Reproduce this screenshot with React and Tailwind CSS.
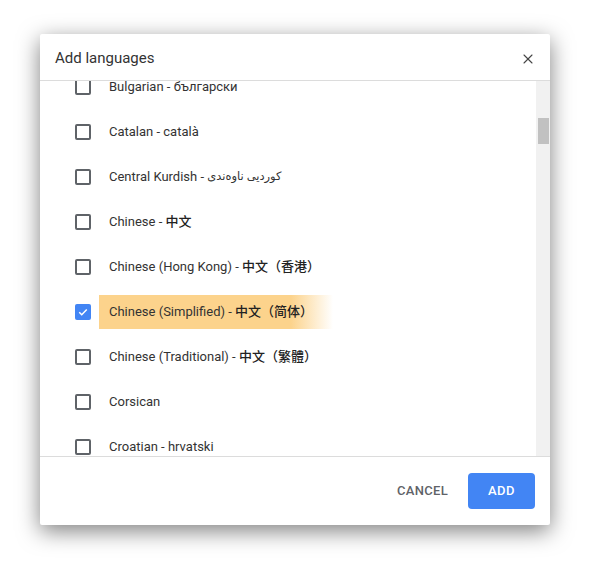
import { X } from "lucide-react";

const languages = [
  { name: "Bulgarian - български" },
  { name: "Catalan - català" },
  { name: "Central Kurdish - ", native: "کوردیی ناوەندی", rtl: true },
  { name: "Chinese - ", native: "中文", cjk: true },
  { name: "Chinese (Hong Kong) - ", native: "中文（香港）", cjk: true },
  { name: "Chinese (Simplified) - ", native: "中文（简体）", cjk: true, checked: true },
  { name: "Chinese (Traditional) - ", native: "中文（繁體）", cjk: true },
  { name: "Corsican" },
  { name: "Croatian - hrvatski" },
  { name: "Czech - čeština" },
];

const Checkbox = ({ checked }) =>
  checked ? (
    <div className="w-4 h-4 rounded-[2px] bg-[#4285f4] flex items-center justify-center">
      <svg width="12" height="12" viewBox="0 0 24 24" fill="none">
        <path d="M4.5 12.5l5 5L19.5 7" stroke="white" strokeWidth="3" />
      </svg>
    </div>
  ) : (
    <div className="w-4 h-4 rounded-[2px] border-2 border-[#5f6368]" />
  );

const LanguageRow = ({ name, native, cjk, rtl, checked }) => (
  <div className="h-[45px] flex items-center pl-[35px]">
    <Checkbox checked={checked} />
    <div className="ml-[8px] h-[34px] flex items-center">
      <span
        className={`h-[34px] flex items-center whitespace-pre pl-[10px] pr-[20px] text-[13px] text-[#333] ${
          checked
            ? "bg-[linear-gradient(to_right,#fcd38c_0%,#fcd38c_82%,rgba(252,211,140,0)_100%)]"
            : ""
        }`}
      >
        {name}
        {native && (
          <span className={cjk ? "font-medium text-[#222]" : rtl ? "text-[11.5px]" : ""}>
            {native}
          </span>
        )}
      </span>
    </div>
  </div>
);

const App = () => {
  return (
    <div
      className="min-h-[572px] bg-white pt-[34px] pl-[40px]"
      style={{ fontFamily: "Roboto, 'Noto Sans CJK SC', 'DejaVu Sans', sans-serif" }}
    >
      <div className="w-[510px] h-[491px] bg-white rounded-[2px] shadow-[0_6px_22px_rgba(0,0,0,0.5)] flex flex-col">
        <div className="h-[47px] flex items-center justify-between pt-[3px] pl-[15px] pr-[14px] border-b border-[#dcdcdc] shrink-0">
          <h2 className="text-[15px] text-[#333]">Add languages</h2>
          <X size={16} strokeWidth={1.6} className="text-[#444]" />
        </div>

        <div className="flex-1 flex min-h-0">
          <div className="flex-1 overflow-hidden">
            <div className="-mt-[17px]">
              {languages.map((lang) => (
                <LanguageRow key={lang.name} {...lang} />
              ))}
            </div>
          </div>
          <div className="w-[14px] bg-[#f1f1f1] pt-[37px] pl-[2px]">
            <div className="w-[11px] h-[26px] bg-[#c1c1c1]" />
          </div>
        </div>

        <div className="h-[69px] shrink-0 border-t border-[#dcdcdc] flex items-center justify-end gap-[4px] pr-[15px]">
          <button className="h-9 px-4 text-[13px] font-medium tracking-[0.3px] text-[#5f6368] rounded">
            CANCEL
          </button>
          <button className="h-9 w-[67px] text-[13px] font-medium tracking-[0.5px] text-white bg-[#4285f4] rounded">
            ADD
          </button>
        </div>
      </div>
    </div>
  );
};

export default App;
